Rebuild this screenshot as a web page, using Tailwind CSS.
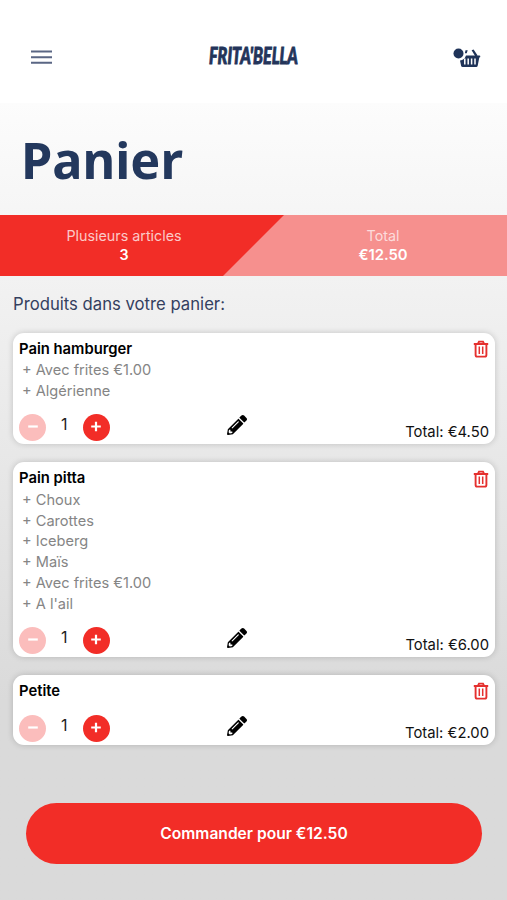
<!DOCTYPE html>
<html lang="fr">
<head>
<meta charset="utf-8">
<title>Panier</title>
<script src="https://cdn.jsdelivr.net/npm/@tailwindcss/browser@4"></script>
</head>
<body class="w-[507px] h-[900px] overflow-hidden bg-white font-['Inter',sans-serif]">
<svg class="hidden">
  <symbol id="trash" viewBox="0 0 16 18"><path d="M.8 4h14.400M5 3.600l1-2h4l1 2M2.600 4V15q0 1.600 1.600 1.600h7.600q1.600 0 1.600-1.600V4" fill="none" stroke="currentColor" stroke-width="1.900"/><path d="M6.300 6.500v7.500M9.700 6.500v7.500" stroke="currentColor" stroke-width="1.500"/></symbol>
  <symbol id="pencil" viewBox="0 0 512 512"><path fill="currentColor" d="M498 142l-46.600 46.600c-4.700 4.700-12.300 4.700-17 0L323.500 77.700c-4.700-4.700-4.700-12.300 0-17L370.100 14c18.700-18.700 49.100-18.700 67.900 0l60.100 60.100c18.700 18.700 18.700 49.100 0 67.900zM284.200 99.800L21.600 362.400.4 483.900c-2.900 16.400 11.400 30.600 27.800 27.800l121.500-21.300 262.600-262.600c4.700-4.700 4.700-12.300 0-17L301.400 99.800c-4.900-4.700-12.500-4.700-17.200 0zM124.100 339.900c-5.500-5.500-5.500-14.300 0-19.800l154-154c5.500-5.500 14.300-5.500 19.800 0s5.500 14.300 0 19.800l-154 154c-5.500 5.500-14.300 5.500-19.800 0zM88 424h48v36.300l-64.500 11.300-31.100-31.100L51.700 376H88v48z"/></symbol>
  <symbol id="minus" viewBox="0 0 12 12"><path d="M1.200 5.500h9.600" stroke="currentColor" stroke-width="2.200"/></symbol>
  <symbol id="plus" viewBox="0 0 12 12"><path d="M1.200 5.500h9.600M6 .7v9.600" stroke="currentColor" stroke-width="2.200"/></symbol>
</svg>
<div class="flex flex-col h-full">
  <header class="h-[103px] shrink-0 flex items-center justify-between pl-[31px] pr-[26px] pt-[11px] bg-white">
    <svg class="w-[21px] h-[14px]" viewBox="0 0 21 14"><path d="M0 1.500h21M0 7.300h21M0 12.800h21" stroke="#5a6684" stroke-width="1.900"/></svg>
    <svg class="w-[102px] h-[30px] -mt-[2px] ml-[3px] overflow-visible" viewBox="0 0 102 30"><text x="6" y="23" textLength="89" lengthAdjust="spacingAndGlyphs" font-family="Lato, sans-serif" font-weight="900" font-style="italic" font-size="23" fill="#23345a" stroke="#23345a" stroke-width=".9">FRITA'BELLA</text></svg>
    <svg class="w-[28px] h-[20px] mt-[1px]" viewBox="0 0 28 20"><circle cx="5.500" cy="5.500" r="5" fill="#1f3358"/><path d="M12.500 2.200h2.200l-1 3h-1.800zM18.600 2.300l2-.7 4 6-2.200 1z" fill="#1f3358"/><path d="M13 7.500h13.500q.8 0 .8.900t-1 1l-1.600 8.300q-.3 1.300-1.500 1.300H9.600q-1.200 0-1.500-1.300L7 12.500Q11.500 12 13 7.500z" fill="#1f3358"/><path d="M11.800 10.500v6M15.200 10.500v6M18.600 10.500v6M22 10.500v6" stroke="#fff" stroke-width="1.500"/></svg>
  </header>
  <main class="flex-1 flex flex-col bg-linear-to-b from-[#fcfcfc] via-[#ececec] via-35% to-[#dadada] to-75%">
    <h1 class="h-[112px] shrink-0 pl-[21px] pt-[21.500px] font-['Noto_Sans',sans-serif] font-bold text-[50.400px] leading-[70px] text-[#23385d]">Panier</h1>
    <section class="h-[61px] shrink-0 relative grid grid-cols-[248px_259px] bg-[#f6908e] text-center text-[14.300px] leading-[18.500px] text-white pt-[12px]">
      <svg class="absolute inset-0 w-full h-full" viewBox="0 0 507 61"><path d="M0 0h284l-61 61H0z" fill="#f22d27"/></svg>
      <div class="relative"><p class="text-white/75">Plusieurs articles</p><p class="font-semibold">3</p></div>
      <div class="relative pl-[11px]"><p class="text-white/70">Total</p><p class="font-semibold text-[14.800px]">€12.50</p></div>
    </section>
    <h2 class="h-[56.500px] shrink-0 pl-[13px] pt-[16px] text-[16.700px] leading-[24px] text-[#34405f]">Produits dans votre panier:</h2>
    <div class="flex flex-col gap-[18px] pl-[13px] pr-[12px] text-[14.800px]">
      <article class="bg-white rounded-[11px] shadow-[0_0_6px_rgba(0,0,0,0.18)] pl-[6px] pr-[6px] pt-[6px] flex flex-col">
        <div class="flex justify-between h-[20.800px]"><h3 class="font-semibold leading-[20px]">Pain hamburger</h3><svg class="w-[16px] h-[18px] mt-[1.500px] text-[#e5302e]"><use href="#trash"/></svg></div>
        <ul class="relative top-[1px] pl-[3px] text-[14.600px] leading-[20.800px] text-[#858585]"><li>+ Avec frites €1.00</li><li>+ Algérienne</li></ul>
        <div class="h-[43.200px] flex items-start pt-[11px]">
          <span class="mt-[2px] w-[27px] h-[27px] rounded-full bg-[#fbbdbc] text-white flex items-center justify-center"><svg class="w-[12px] h-[12px]"><use href="#minus"/></svg></span>
          <span class="w-[36.500px] text-center leading-[25px] text-[16px] text-[#222]">1</span>
          <span class="mt-[2px] w-[27px] h-[27px] rounded-full bg-[#f22d27] text-white flex items-center justify-center"><svg class="w-[12px] h-[12px]"><use href="#plus"/></svg></span>
          <svg class="w-[20px] h-[20px] ml-[117.500px] mt-[3px]"><use href="#pencil"/></svg>
          <span class="ml-auto mt-[10px] leading-[20px] text-[#111]">Total: €4.50</span>
        </div>
      </article>
      <article class="bg-white rounded-[11px] shadow-[0_0_6px_rgba(0,0,0,0.18)] pl-[6px] pr-[6px] pt-[6px] flex flex-col">
        <div class="flex justify-between h-[20.800px]"><h3 class="font-semibold leading-[20.500px]">Pain pitta</h3><svg class="w-[16px] h-[18px] mt-[1.500px] text-[#e5302e]"><use href="#trash"/></svg></div>
        <ul class="relative top-[1px] pl-[3px] text-[14.600px] leading-[20.800px] text-[#858585]"><li>+ Choux</li><li>+ Carottes</li><li>+ Iceberg</li><li>+ Maïs</li><li>+ Avec frites €1.00</li><li>+ A l'ail</li></ul>
        <div class="h-[43.200px] flex items-start pt-[11px]">
          <span class="mt-[2px] w-[27px] h-[27px] rounded-full bg-[#fbbdbc] text-white flex items-center justify-center"><svg class="w-[12px] h-[12px]"><use href="#minus"/></svg></span>
          <span class="w-[36.500px] text-center leading-[25px] text-[16px] text-[#222]">1</span>
          <span class="mt-[2px] w-[27px] h-[27px] rounded-full bg-[#f22d27] text-white flex items-center justify-center"><svg class="w-[12px] h-[12px]"><use href="#plus"/></svg></span>
          <svg class="w-[20px] h-[20px] ml-[117.500px] mt-[3px]"><use href="#pencil"/></svg>
          <span class="ml-auto mt-[10px] leading-[20px] text-[#111]">Total: €6.00</span>
        </div>
      </article>
      <article class="bg-white rounded-[11px] shadow-[0_0_6px_rgba(0,0,0,0.18)] pl-[6px] pr-[6px] pt-[6px] flex flex-col">
        <div class="flex justify-between h-[20.800px]"><h3 class="font-semibold leading-[20.500px]">Petite</h3><svg class="w-[16px] h-[18px] mt-[1.500px] text-[#e5302e]"><use href="#trash"/></svg></div>
        <div class="h-[43.200px] flex items-start pt-[11px]">
          <span class="mt-[2px] w-[27px] h-[27px] rounded-full bg-[#fbbdbc] text-white flex items-center justify-center"><svg class="w-[12px] h-[12px]"><use href="#minus"/></svg></span>
          <span class="w-[36.500px] text-center leading-[25px] text-[16px] text-[#222]">1</span>
          <span class="mt-[2px] w-[27px] h-[27px] rounded-full bg-[#f22d27] text-white flex items-center justify-center"><svg class="w-[12px] h-[12px]"><use href="#plus"/></svg></span>
          <svg class="w-[20px] h-[20px] ml-[117.500px] mt-[3px]"><use href="#pencil"/></svg>
          <span class="ml-auto mt-[10px] leading-[20px] text-[#111]">Total: €2.00</span>
        </div>
      </article>
    </div>
    <button class="mt-auto mb-[36px] ml-[26px] mr-[25px] h-[61px] shrink-0 rounded-full bg-[#f22d27] text-white font-semibold text-[15.600px]">Commander pour €12.50</button>
  </main>
</div>
</body>
</html>
